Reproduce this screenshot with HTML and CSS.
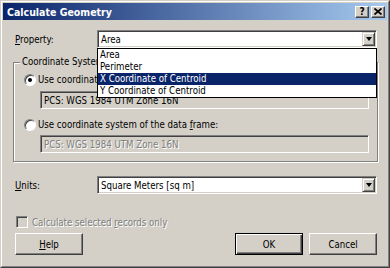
FILE: index.html
```html
<!DOCTYPE html>
<html lang="en">
<head>
    <meta charset="UTF-8">
    <title>Calculate Geometry</title>
    <link rel="stylesheet" href="styles.css">
</head>
<body>
    <div class="window">
        <div class="frame">
            <div class="titlebar">
                <span class="title">Calculate Geometry</span>
                <div class="caption-buttons">
                    <span class="cap-btn cap-help">?</span>
                    <span class="cap-btn">
                        <svg width="8" height="7" viewBox="0 0 8 7"><path d="M0.5 0.5L7.5 6.5M7.5 0.5L0.5 6.5" stroke="#000" stroke-width="1.7"/></svg>
                    </span>
                </div>
            </div>

            <div class="content">
                <div class="row">
                    <span class="label"><u>P</u>roperty:</span>
                    <div class="combo">
                        <span class="combo-value">Area</span>
                        <span class="combo-arrow"><i class="arrow"></i></span>
                        <!-- open drop-down, drawn over the group box below -->
                        <ul class="combo-list">
                            <li>Area</li>
                            <li>Perimeter</li>
                            <li class="selected">X Coordinate of Centroid</li>
                            <li>Y Coordinate of Centroid</li>
                        </ul>
                    </div>
                </div>

                <fieldset class="group">
                    <legend>Coordinate System</legend>
                    <div class="option">
                        <span class="radio checked"></span>
                        <span>Use coordinate system of the data source:</span>
                    </div>
                    <div class="field">PCS: WGS 1984 UTM Zone 16N</div>
                    <div class="option option-second">
                        <span class="radio"></span>
                        <span>Use coordinate system of the data <u>f</u>rame:</span>
                    </div>
                    <div class="field field-disabled"><span class="disabled">PCS: WGS 1984 UTM Zone 16N</span></div>
                </fieldset>

                <div class="row row-units">
                    <span class="label"><u>U</u>nits:</span>
                    <div class="combo">
                        <span class="combo-value">Square Meters [sq m]</span>
                        <span class="combo-arrow"><i class="arrow"></i></span>
                    </div>
                </div>

                <div class="check-row">
                    <span class="checkbox"></span>
                    <span class="disabled">Calculate selected <u>r</u>ecords only</span>
                </div>

                <div class="button-row">
                    <button class="btn"><u>H</u>elp</button>
                    <div class="button-group">
                        <button class="btn btn-default">OK</button>
                        <button class="btn">Cancel</button>
                    </div>
                </div>
            </div>
        </div>
    </div>
</body>
</html>
```

FILE: styles.css
```css
body {
    margin: 0;
    background-color: #d4d0c8;
    font-family: "DejaVu Sans Condensed", "Liberation Sans", sans-serif;
    font-size: 9.6px;
    color: #000;
}

.window {
    width: 390px;
    height: 268px;
    box-sizing: border-box;
    background-color: #d4d0c8;
    border: 1px solid;
    border-color: #d4d0c8 #404040 #404040 #d4d0c8;
}

.frame {
    height: 100%;
    box-sizing: border-box;
    border: 1px solid;
    border-color: #fff #808080 #808080 #fff;
    padding: 1px;
}

.titlebar {
    height: 17px;
    display: flex;
    align-items: center;
    justify-content: space-between;
    padding: 0 2px 0 4px;
    background: linear-gradient(to right, #0a246a, #a6caf0);
}

.title {
    color: #fff;
    font-weight: bold;
    font-size: 10.5px;
}

.caption-buttons {
    display: flex;
    gap: 2px;
}

.cap-btn {
    width: 14px;
    height: 12px;
    box-sizing: border-box;
    display: flex;
    align-items: center;
    justify-content: center;
    background-color: #d4d0c8;
    border: 1px solid;
    border-color: #fff #404040 #404040 #fff;
    box-shadow: inset -1px -1px #808080;
}

.cap-help {
    font-weight: bold;
    font-size: 10px;
    line-height: 10px;
}

.content {
    padding: 10px 9px 0 10px;
}

.row {
    display: flex;
    align-items: center;
    padding-left: 2px;
}

.label {
    width: 82px;
}

.combo {
    position: relative;
    width: 280px;
    height: 18px;
    box-sizing: border-box;
    display: flex;
    align-items: center;
    padding: 1px;
    background-color: #fff;
    border: 1px solid;
    border-color: #808080 #fff #fff #808080;
    box-shadow: inset 1px 1px #404040, inset -1px -1px #d4d0c8;
}

.combo-value {
    padding-left: 2px;
}

.combo-arrow {
    margin-left: auto;
    width: 13px;
    height: 14px;
    box-sizing: border-box;
    display: flex;
    align-items: center;
    justify-content: center;
    background-color: #d4d0c8;
    border: 1px solid;
    border-color: #d4d0c8 #404040 #404040 #d4d0c8;
    box-shadow: inset 1px 1px #fff, inset -1px -1px #808080;
}

.arrow {
    width: 0;
    height: 0;
    border-left: 3.5px solid transparent;
    border-right: 3.5px solid transparent;
    border-top: 4px solid #000;
}

.combo-list {
    position: absolute;
    z-index: 2;
    top: 17px;
    left: -1px;
    right: -1px;
    margin: 0;
    padding: 0;
    list-style: none;
    background-color: #fff;
    border: 1px solid #000;
}

.combo-list li {
    height: 12px;
    line-height: 12px;
    padding-left: 2px;
}

.combo-list .selected {
    background-color: #0a246a;
    color: #fff;
}

.group {
    margin: 8px 0 0;
    padding: 5px 8px 8px 10px;
    min-width: 0;
    border: 1px solid #808080;
    box-shadow: inset 1px 1px #fff, 1px 1px #fff;
}

.group legend {
    margin-left: -4px;
    padding: 0 2px;
    line-height: 12px;
    background-color: #d4d0c8;
}

.option {
    display: flex;
    align-items: center;
    gap: 2px;
    height: 13px;
    white-space: nowrap;
}

.option-second {
    margin-top: 9px;
}

.radio {
    position: relative;
    flex-shrink: 0;
    width: 12px;
    height: 12px;
    box-sizing: border-box;
    border-radius: 50%;
    background-color: #fff;
    border: 1px solid;
    border-color: #808080 #fff #fff #808080;
    box-shadow: inset 1px 1px #404040;
}

.radio.checked::after {
    content: "";
    position: absolute;
    left: 3px;
    top: 3px;
    width: 4px;
    height: 4px;
    border-radius: 50%;
    background-color: #000;
}

.field {
    margin: 5px 0 0 16px;
    height: 18px;
    box-sizing: border-box;
    display: flex;
    align-items: center;
    padding-left: 3px;
    background-color: #d4d0c8;
    border: 1px solid;
    border-color: #808080 #fff #fff #808080;
    box-shadow: inset 1px 1px #404040;
}

.field-disabled {
    margin-top: 4px;
}

.disabled {
    color: #808080;
    text-shadow: 1px 1px #fff;
}

.row-units {
    margin-top: 14px;
}

.check-row {
    display: flex;
    align-items: center;
    gap: 4px;
    height: 12px;
    margin-top: 22px;
    padding-left: 3px;
}

.checkbox {
    width: 12px;
    height: 12px;
    box-sizing: border-box;
    background-color: #d4d0c8;
    border: 1px solid;
    border-color: #808080 #fff #fff #808080;
    box-shadow: inset 1px 1px #404040;
}

.button-row {
    display: flex;
    justify-content: space-between;
    margin-top: 5px;
    padding: 0 1px 0 2px;
}

.button-group {
    display: flex;
    gap: 6px;
}

.btn {
    width: 68px;
    height: 22px;
    box-sizing: border-box;
    padding: 0;
    font-family: inherit;
    font-size: 9.6px;
    color: #000;
    background-color: #d4d0c8;
    border: 1px solid;
    border-color: #fff #404040 #404040 #fff;
    box-shadow: inset -1px -1px #808080;
}

.btn-default {
    border-color: #000;
    box-shadow: inset 1px 1px #fff, inset -1px -1px #404040, inset -2px -2px #808080;
}
```
